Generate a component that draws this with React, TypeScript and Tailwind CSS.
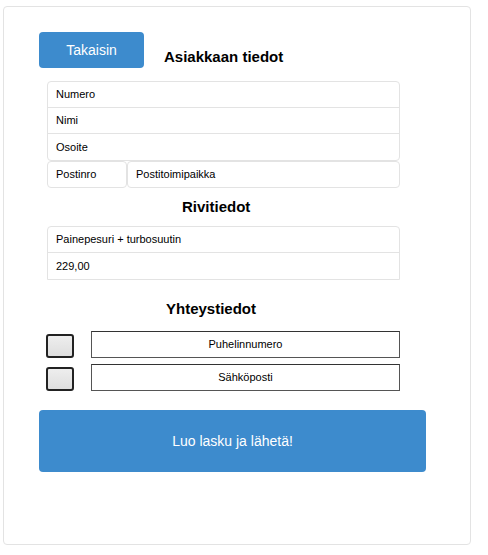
const font = { fontFamily: '"Liberation Sans", Arial, sans-serif' };

const Row = ({ label, last }: { label: string; last?: boolean }) => (
  <div className={`h-[26px] pl-[8px] flex items-center text-[11px] text-black ${last ? '' : 'border-b border-[#e3e3e3]'}`}>
    {label}
  </div>
);

const Contact = ({ label }: { label: string }) => (
  <div className="flex items-center">
    <div className="w-[28px] h-[24px] ml-[7px] mt-[2px] rounded-[3px] border-2 border-[#222] bg-gradient-to-b from-[#eeeeee] to-[#dedede]" />
    <div className="ml-[17px] w-[309px] h-[27px] border border-[#555] border-t-[#333] flex items-center justify-center text-[11px] text-black">
      {label}
    </div>
  </div>
);

export default function App() {
  return (
    <div className="w-[488px] h-[555px] bg-white relative" style={font}>
      <div className="ml-[3px] mt-[6px] w-[468px] h-[539px] border border-[#e3e3e3] rounded-[4px] pl-[35px] pt-[25px]">
        <div className="flex items-end">
          <button className="w-[105px] h-[36px] bg-[#3d8bcd] rounded-[4px] text-white text-[14px]">Takaisin</button>
          <h2 className="ml-[20px] mb-[2px] text-[15px] leading-[18px] font-bold text-black">Asiakkaan tiedot</h2>
        </div>

        <div className="ml-[8px] mt-[13px] w-[353px]">
          <div className="border border-[#e3e3e3] rounded-[4px]">
            <Row label="Numero" />
            <Row label="Nimi" />
            <Row label="Osoite" last />
          </div>
          <div className="flex">
            <div className="w-[80px] h-[27px] border border-[#e3e3e3] rounded-[4px] pl-[8px] flex items-center text-[11px]">Postinro</div>
            <div className="flex-1 h-[27px] border border-[#e3e3e3] rounded-[4px] pl-[8px] flex items-center text-[11px]">Postitoimipaikka</div>
          </div>
        </div>

        <h2 className="mt-[10px] pl-[143px] text-[15px] leading-[18px] font-bold text-black">Rivitiedot</h2>

        <div className="ml-[8px] mt-[10px] w-[353px] border border-[#e3e3e3] rounded-t-[4px]">
          <Row label="Painepesuri + turbosuutin" />
          <Row label="229,00" last />
        </div>

        <h2 className="mt-[20px] pl-[127px] text-[15px] leading-[18px] font-bold text-black">Yhteystiedot</h2>

        <div className="mt-[13px] flex flex-col gap-[6px]">
          <Contact label="Puhelinnumero" />
          <Contact label="Sähköposti" />
        </div>

        <button className="mt-[19px] w-[387px] h-[62px] bg-[#3d8bcd] rounded-[4px] text-white text-[14px]">
          Luo lasku ja lähetä!
        </button>
      </div>
      <div className="absolute left-0 right-0 top-[552px] h-[2px] bg-[#cfcfcf]" />
    </div>
  );
}
